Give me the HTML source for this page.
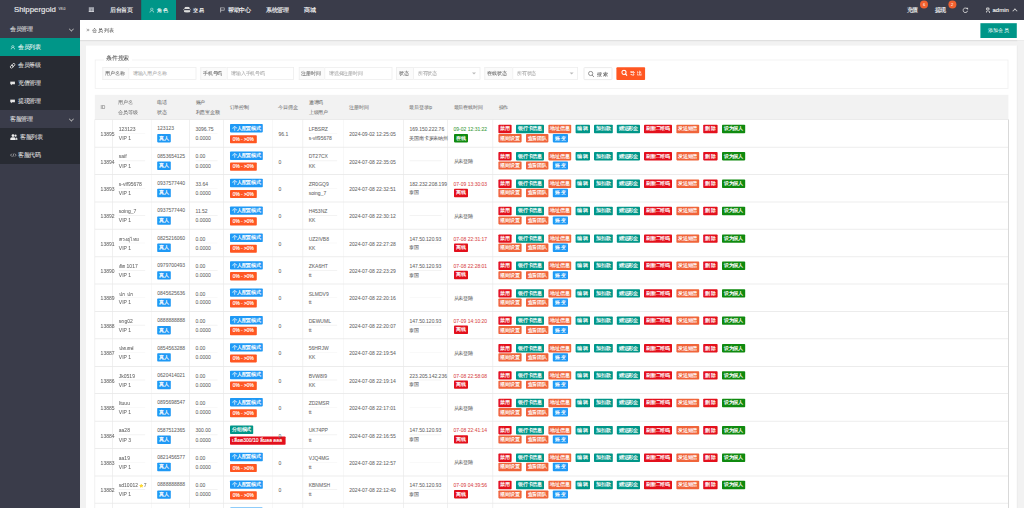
<!DOCTYPE html><html><head><meta charset='utf-8'><style>
*{margin:0;padding:0;box-sizing:border-box}
html,body{width:1024px;height:508px;overflow:hidden;background:#f2f2f2;font-family:'Liberation Sans', sans-serif;}
.ab{position:absolute;white-space:nowrap}
.t{position:absolute;white-space:nowrap;line-height:1;transform:translateY(-50%);-webkit-text-stroke:0.3px currentColor}
.n{-webkit-text-stroke:0.12px currentColor}
.btn{position:absolute;height:20.75px;line-height:20.75px;color:#fff;font-size:12px;text-align:center;border-radius:2px;white-space:nowrap;-webkit-text-stroke:0.375px #fff}
</style></head><body><div id='w' style='position:absolute;left:0;top:0;width:2560px;height:1270px;transform:scale(0.4);transform-origin:0 0;overflow:hidden'><div class='ab' style='left:0;top:0;width:2560px;height:50px;background:#3a3c4a'></div>
<div class='t' style='left:35px;top:22.75px;font-size:19.625px;color:#eaeaea;-webkit-text-stroke:0.375px #eaeaea'>Shippergold</div>
<div class='t' style='left:146.25px;top:21.25px;font-size:8.5px;color:#ccc;-webkit-text-stroke:0.25px #ccc'>V8.0</div>
<div class='ab' style='left:222px;top:17.5px;width:13.25px;height:12.75px;background:#a4a7b0'></div>
<div class='ab' style='left:222px;top:27.5px;width:13.25px;height:2.75px;background:#d8d9de'></div>
<div class='ab' style='left:227.75px;top:21.5px;width:1.5px;height:6px;background:#5a5d68'></div>
<div class='t' style='left:275px;top:25.25px;font-size:13.875px;color:#f4f4f4;-webkit-text-stroke:0.375px #f4f4f4'>后台首页</div>
<div class='ab' style='left:352.5px;top:0;width:87.5px;height:50px;background:#009688'></div>
<svg class='ab' style='left:372.5px;top:18.5px;width:13px;height:13px' viewBox='0 0 10 10'><circle cx='5' cy='3' r='2.3' fill='none' stroke='#cfeee9' stroke-width='1.1'/><path d='M1 10 Q1 5.8 5 5.8 Q9 5.8 9 10' fill='none' stroke='#cfeee9' stroke-width='1.1'/></svg>
<div class='t' style='left:392.5px;top:25.25px;font-size:13.5px;color:#fff;-webkit-text-stroke:0.375px #fff'>角色</div>
<svg class='ab' style='left:457.5px;top:16.25px;width:19.5px;height:16.25px' viewBox='0 0 12 10'><ellipse cx='6' cy='2.3' rx='4' ry='1.8' fill='#ddd'/><ellipse cx='6' cy='5' rx='5.5' ry='2' fill='none' stroke='#ddd' stroke-width='1.2'/><ellipse cx='6' cy='7.6' rx='5' ry='1.8' fill='#ddd'/></svg>
<div class='t' style='left:482.5px;top:25.25px;font-size:13.5px;color:#f4f4f4;-webkit-text-stroke:0.375px #f4f4f4'>交易</div>
<svg class='ab' style='left:549.5px;top:18.25px;width:12.5px;height:13.5px' viewBox='0 0 9 10'><path d='M1 0.5 V10' stroke='#ddd' stroke-width='1.3'/><path d='M1 1 H8 V5.6 H1' fill='none' stroke='#ddd' stroke-width='1.2'/></svg>
<div class='t' style='left:570px;top:25.25px;font-size:13.875px;color:#f4f4f4;-webkit-text-stroke:0.375px #f4f4f4'>帮助中心</div>
<div class='t' style='left:665px;top:25.25px;font-size:13.875px;color:#f4f4f4;-webkit-text-stroke:0.375px #f4f4f4'>系统管理</div>
<div class='t' style='left:760px;top:25.25px;font-size:14px;color:#f4f4f4;-webkit-text-stroke:0.375px #f4f4f4'>商城</div>
<div class='t' style='left:2266.75px;top:25.25px;font-size:14.375px;color:#f4f4f4;-webkit-text-stroke:0.375px #f4f4f4'>充值</div>
<div class='ab' style='left:2300px;top:0.5px;width:20px;height:20px;border-radius:50%;background:#f0612f;color:#fff;font-size:10px;line-height:20px;text-align:center'>6</div>
<div class='t' style='left:2336.5px;top:25.25px;font-size:14.375px;color:#f4f4f4;-webkit-text-stroke:0.375px #f4f4f4'>提现</div>
<div class='ab' style='left:2370.5px;top:0.5px;width:20px;height:20px;border-radius:50%;background:#f0612f;color:#fff;font-size:10px;line-height:20px;text-align:center'>2</div>
<svg class='ab' style='left:2405.5px;top:18px;width:15px;height:15px' viewBox='0 0 10 10'><path d='M8.2 3.2 A3.8 3.8 0 1 0 8.6 6' fill='none' stroke='#e0e0e0' stroke-width='1.6'/><path d='M6.2 1 L9.6 1 L9.6 4.6 Z' fill='#e0e0e0'/></svg>
<div class='ab' style='left:2465px;top:18.75px;width:8.75px;height:7.5px;border-radius:50%;border:2px solid #ddd'></div>
<div class='ab' style='left:2463.75px;top:26.25px;width:11.25px;height:6.25px;border:2px solid #ddd;border-bottom:none;border-radius:5px 5px 0 0'></div>
<div class='t' style='left:2481.25px;top:24.5px;font-size:15px;color:#f4f4f4'>admin</div>
<div class='ab' style='left:2532.5px;top:23.25px;width:8.75px;height:8.75px;border-left:2px solid #ddd;border-top:2px solid #ddd;transform:rotate(45deg)'></div>
<div class='ab' style='left:0;top:50px;width:200px;height:1220px;background:#3a3c4a'></div>
<div class='ab' style='left:0;top:95px;width:200px;height:180px;background:#282b33'></div>
<div class='ab' style='left:0;top:320px;width:200px;height:90px;background:#282b33'></div>
<div class='ab' style='left:0;top:95px;width:200px;height:45px;background:#009688'></div>
<div class='t n' style='left:25px;top:73.75px;font-size:13.75px;color:#e8e8e8'>会员管理</div>
<div class='ab' style='left:173.75px;top:67.5px;width:9px;height:9px;border-right:2px solid #bbb;border-bottom:2px solid #bbb;transform:rotate(45deg)'></div>
<div class='t n' style='left:45px;top:117.5px;font-size:13.75px;color:#fff'>会员列表</div>
<svg class='ab' style='left:25.75px;top:112.5px;width:12.25px;height:11.75px' viewBox='0 0 10 10'><circle cx='5' cy='3' r='2.3' fill='none' stroke='#e0f5f2' stroke-width='1.5'/><path d='M0.8 9.6 Q1.2 5.8 3.6 5.4 M9.2 9.6 Q8.8 5.8 6.4 5.4' fill='none' stroke='#e0f5f2' stroke-width='1.5'/></svg>
<div class='t n' style='left:45px;top:162.5px;font-size:13.75px;color:#e8e8e8'>会员等级</div>
<svg class='ab' style='left:23.5px;top:156.5px;width:15px;height:15px' viewBox='0 0 10 10'><g transform='rotate(-45 5 5)' fill='none' stroke='#e6e6e6' stroke-width='1.5'><rect x='0.3' y='3' width='5.4' height='4' rx='2'/><rect x='4.3' y='3' width='5.4' height='4' rx='2'/></g></svg>
<div class='t n' style='left:45px;top:207.5px;font-size:13.75px;color:#e8e8e8'>充值管理</div>
<svg class='ab' style='left:24.75px;top:203px;width:13px;height:11px' viewBox='0 0 10 8.5'><path d='M0.5 0.5 H9.5 V6 H4 L2 8.3 V6 H0.5 Z' fill='#e6e6e6'/></svg>
<div class='t n' style='left:45px;top:252.5px;font-size:13.75px;color:#e8e8e8'>提现管理</div>
<svg class='ab' style='left:24.75px;top:248px;width:13px;height:11px' viewBox='0 0 10 8.5'><path d='M0.5 0.5 H9.5 V6 H4 L2 8.3 V6 H0.5 Z' fill='#e6e6e6'/></svg>
<div class='t n' style='left:25px;top:298.75px;font-size:13.75px;color:#e8e8e8'>客服管理</div>
<div class='ab' style='left:173.75px;top:292.5px;width:9px;height:9px;border-right:2px solid #bbb;border-bottom:2px solid #bbb;transform:rotate(45deg)'></div>
<svg class='ab' style='left:24.75px;top:334.5px;width:19.5px;height:15px' viewBox='0 0 13 10'><circle cx='5' cy='2.6' r='2.3' fill='#eee'/><path d='M0.5 10 V8 Q0.5 5.6 5 5.6 Q9.5 5.6 9.5 8 V10 Z' fill='#eee'/><circle cx='9.3' cy='2.8' r='1.8' fill='#eee'/><path d='M10 5.8 Q12.6 6 12.6 8 V10 H10.4 Z' fill='#eee'/></svg>
<div class='t n' style='left:50px;top:342.5px;font-size:13.75px;color:#e8e8e8'>客服列表</div>
<svg class='ab' style='left:24.75px;top:383.25px;width:17px;height:9.5px' viewBox='0 0 12 7'><path d='M3.2 0.8 L0.8 3.5 L3.2 6.2 M8.8 0.8 L11.2 3.5 L8.8 6.2 M7 0.5 L5 6.5' fill='none' stroke='#ddd' stroke-width='1.1'/></svg>
<div class='t n' style='left:45px;top:387.5px;font-size:13.75px;color:#e8e8e8'>客服代码</div>
<div class='ab' style='left:200px;top:50px;width:2360px;height:50px;background:#fff'></div>
<div class='ab' style='left:200px;top:99.5px;width:2360px;height:3.5px;background:#e0e0e0'></div>
<svg class='ab' style='left:214.75px;top:71px;width:9.5px;height:8px' viewBox='0 0 8 7'><path d='M1 0.8 L4 3.5 L1 6.2 M4 0.8 L7 3.5 L4 6.2' fill='none' stroke='#888' stroke-width='1.7'/></svg>
<div class='t n' style='left:230.75px;top:75.25px;font-size:13.625px;color:#555'>会员列表</div>
<div class='ab' style='left:2450.75px;top:57.5px;width:90.75px;height:37.5px;background:#009688;color:#fff;font-size:12.5px;line-height:37.5px;text-align:center'>添加会员</div>
<div class='ab' style='left:215px;top:113.75px;width:2327.5px;height:1175px;background:#fff'></div>
<div class='ab' style='left:236.5px;top:149px;width:2284.5px;height:72.5px;border:2.5px solid #f0f0f0'></div>
<div class='ab' style='left:260px;top:137.5px;width:70px;height:17.5px;background:#fff'></div>
<div class='t n' style='left:266px;top:146.25px;font-size:14px;color:#555'>条件搜索</div>
<div class='ab' style='left:256px;top:167.5px;width:64.75px;height:32.5px;background:#fbfbfb;border:2.5px solid #eee;border-right:none'></div>
<div class='t n' style='left:263px;top:183.75px;font-size:11.875px;color:#666'>用户名称</div>
<div class='ab' style='left:320.75px;top:167.5px;width:170px;height:32.5px;background:#fff;border:2.5px solid #eee'></div>
<div class='t n' style='left:332px;top:183.75px;font-size:11.75px;color:#aaa'>请输入用户名称</div>
<div class='ab' style='left:500.5px;top:167.5px;width:66.25px;height:32.5px;background:#fbfbfb;border:2.5px solid #eee;border-right:none'></div>
<div class='t n' style='left:507.5px;top:183.75px;font-size:11.875px;color:#666'>手机号码</div>
<div class='ab' style='left:566.75px;top:167.5px;width:168px;height:32.5px;background:#fff;border:2.5px solid #eee'></div>
<div class='t n' style='left:578px;top:183.75px;font-size:11.75px;color:#aaa'>请输入手机号码</div>
<div class='ab' style='left:746.5px;top:167.5px;width:64.5px;height:32.5px;background:#fbfbfb;border:2.5px solid #eee;border-right:none'></div>
<div class='t n' style='left:753.5px;top:183.75px;font-size:11.875px;color:#666'>注册时间</div>
<div class='ab' style='left:811px;top:167.5px;width:169.5px;height:32.5px;background:#fff;border:2.5px solid #eee'></div>
<div class='t n' style='left:822.25px;top:183.75px;font-size:11.75px;color:#aaa'>请选择注册时间</div>
<div class='ab' style='left:990.25px;top:167.5px;width:43px;height:32.5px;background:#fbfbfb;border:2.5px solid #eee;border-right:none'></div>
<div class='t n' style='left:997.25px;top:183.75px;font-size:11.875px;color:#666'>状态</div>
<div class='ab' style='left:1033.25px;top:167.5px;width:168px;height:32.5px;background:#fff;border:2.5px solid #eee'></div>
<div class='t n' style='left:1044.5px;top:183.75px;font-size:11.75px;color:#aaa'>所有状态</div>
<div class='ab' style='left:1180px;top:181.25px;width:0;height:0;border-left:5px solid transparent;border-right:5px solid transparent;border-top:5px solid #bbb'></div>
<div class='ab' style='left:1211px;top:167.5px;width:70.25px;height:32.5px;background:#fbfbfb;border:2.5px solid #eee;border-right:none'></div>
<div class='t n' style='left:1218px;top:183.75px;font-size:11.875px;color:#666'>在线状态</div>
<div class='ab' style='left:1281.25px;top:167.5px;width:163.75px;height:32.5px;background:#fff;border:2.5px solid #eee'></div>
<div class='t n' style='left:1292.5px;top:183.75px;font-size:11.75px;color:#aaa'>所有状态</div>
<div class='ab' style='left:1423.75px;top:181.25px;width:0;height:0;border-left:5px solid transparent;border-right:5px solid transparent;border-top:5px solid #bbb'></div>
<div class='ab' style='left:1459px;top:167.5px;width:72.25px;height:32.5px;background:#fff;border:2.5px solid #e6e6e6;border-radius:2.5px'></div>
<svg class='ab' style='left:1469.5px;top:176.5px;width:15.5px;height:16.5px' viewBox='0 0 10 10.6'><circle cx='4.3' cy='4.3' r='3.4' fill='none' stroke='#666' stroke-width='1.1'/><path d='M6.8 6.9 L9.4 9.8' stroke='#666' stroke-width='1.3'/></svg>
<div class='t n' style='left:1492px;top:185px;font-size:13px;color:#555;letter-spacing:2.75px'>搜索</div>
<div class='ab' style='left:1541px;top:167.5px;width:71.5px;height:32.5px;background:#FF5722;border-radius:2.5px'></div>
<svg class='ab' style='left:1552.5px;top:173.5px;width:16px;height:16.5px' viewBox='0 0 10 10.3'><circle cx='4.3' cy='4.3' r='3.3' fill='none' stroke='#fff' stroke-width='1.6'/><path d='M6.6 6.8 L9.3 9.6' stroke='#fff' stroke-width='1.8'/></svg>
<div class='t' style='left:1575.75px;top:183.75px;font-size:13px;color:#fff;letter-spacing:2.75px'>导出</div>
<div class='ab' style='left:236.5px;top:236.75px;width:2284.5px;height:62.25px;background:#f2f2f2'></div>
<div class='t n' style='left:251.5px;top:268.75px;font-size:11.5px;color:#777'>ID</div>
<div class='t n' style='left:295.75px;top:256.75px;font-size:11.5px;color:#777'>用户名</div>
<div class='t n' style='left:295.75px;top:280.5px;font-size:11.5px;color:#777'>会员等级</div>
<div class='t n' style='left:393.25px;top:256.75px;font-size:11.5px;color:#777'>电话</div>
<div class='t n' style='left:393.25px;top:280.5px;font-size:11.5px;color:#777'>状态</div>
<div class='t n' style='left:488.75px;top:256.75px;font-size:11.5px;color:#777'>账户</div>
<div class='t n' style='left:488.75px;top:280.5px;font-size:11.5px;color:#777'>利息宝金额</div>
<div class='t n' style='left:573.75px;top:268.75px;font-size:11.5px;color:#777'>订单控制</div>
<div class='t n' style='left:696.25px;top:268.75px;font-size:11.5px;color:#777'>今日佣金</div>
<div class='t n' style='left:771.75px;top:256.75px;font-size:11.5px;color:#777'>邀请码</div>
<div class='t n' style='left:771.75px;top:280.5px;font-size:11.5px;color:#777'>上级用户</div>
<div class='t n' style='left:873.25px;top:268.75px;font-size:11.5px;color:#777'>注册时间</div>
<div class='t n' style='left:1023.5px;top:268.75px;font-size:11.5px;color:#777'>最后登录ip</div>
<div class='t n' style='left:1133.75px;top:268.75px;font-size:11.5px;color:#777'>最后在线时间</div>
<div class='t n' style='left:1246.5px;top:268.75px;font-size:11.5px;color:#777'>操作</div>
<div class='ab' style='left:235.75px;top:299px;width:1.75px;height:971px;background:#ededed'></div>
<div class='ab' style='left:280px;top:299px;width:1.75px;height:971px;background:#ededed'></div>
<div class='ab' style='left:377.5px;top:299px;width:1.75px;height:971px;background:#ededed'></div>
<div class='ab' style='left:473px;top:299px;width:1.75px;height:971px;background:#ededed'></div>
<div class='ab' style='left:558px;top:299px;width:1.75px;height:971px;background:#ededed'></div>
<div class='ab' style='left:680.5px;top:299px;width:1.75px;height:971px;background:#ededed'></div>
<div class='ab' style='left:756px;top:299px;width:1.75px;height:971px;background:#ededed'></div>
<div class='ab' style='left:857.5px;top:299px;width:1.75px;height:971px;background:#ededed'></div>
<div class='ab' style='left:1007.75px;top:299px;width:1.75px;height:971px;background:#ededed'></div>
<div class='ab' style='left:1118px;top:299px;width:1.75px;height:971px;background:#ededed'></div>
<div class='ab' style='left:1230.75px;top:299px;width:1.75px;height:971px;background:#ededed'></div>
<div class='ab' style='left:2519.75px;top:299px;width:1.75px;height:971px;background:#ededed'></div>
<div class='ab' style='left:236.5px;top:298px;width:2284.5px;height:2px;background:#e8e8e8'></div>
<div class='ab' style='left:236.5px;top:366.5px;width:2284.5px;height:2px;background:#e8e8e8'></div>
<div class='ab' style='left:236.5px;top:435px;width:2284.5px;height:2px;background:#e8e8e8'></div>
<div class='ab' style='left:236.5px;top:503.5px;width:2284.5px;height:2px;background:#e8e8e8'></div>
<div class='ab' style='left:236.5px;top:572px;width:2284.5px;height:2px;background:#e8e8e8'></div>
<div class='ab' style='left:236.5px;top:640.5px;width:2284.5px;height:2px;background:#e8e8e8'></div>
<div class='ab' style='left:236.5px;top:709px;width:2284.5px;height:2px;background:#e8e8e8'></div>
<div class='ab' style='left:236.5px;top:777.5px;width:2284.5px;height:2px;background:#e8e8e8'></div>
<div class='ab' style='left:236.5px;top:846px;width:2284.5px;height:2px;background:#e8e8e8'></div>
<div class='ab' style='left:236.5px;top:914.5px;width:2284.5px;height:2px;background:#e8e8e8'></div>
<div class='ab' style='left:236.5px;top:983px;width:2284.5px;height:2px;background:#e8e8e8'></div>
<div class='ab' style='left:236.5px;top:1051.5px;width:2284.5px;height:2px;background:#e8e8e8'></div>
<div class='ab' style='left:236.5px;top:1120px;width:2284.5px;height:2px;background:#e8e8e8'></div>
<div class='ab' style='left:236.5px;top:1188.5px;width:2284.5px;height:2px;background:#e8e8e8'></div>
<div class='ab' style='left:236.5px;top:1257px;width:2284.5px;height:2px;background:#e8e8e8'></div>
<div class='ab' style='left:236.5px;top:1325.5px;width:2284.5px;height:2px;background:#e8e8e8'></div>
<div class='t n' style='left:251.5px;top:336.125px;font-size:12.5px;color:#666'>13895</div>
<div class='t n' style='left:297px;top:323.5px;font-size:12.5px;color:#666'>123123</div>
<div class='ab' style='left:297px;top:332.5px;width:66.25px;height:1.5px;background:#f0f0f0'></div>
<div class='t n' style='left:297px;top:346px;font-size:12.5px;color:#666'>VIP 1</div>
<div class='t n' style='left:393.25px;top:321.5px;font-size:12.5px;color:#666'>123123</div>
<div class='btn' style='left:392.5px;top:335.25px;width:34.5px;height:20.75px;line-height:20.75px;background:#1f99f5'>真人</div>
<div class='t n' style='left:488.75px;top:323.5px;font-size:12.5px;color:#666'>3096.75</div>
<div class='ab' style='left:488.75px;top:332.5px;width:55px;height:1.5px;background:#f0f0f0'></div>
<div class='t n' style='left:488.75px;top:346px;font-size:12.5px;color:#666'>0.0000</div>
<div class='btn' style='left:575px;top:310.25px;width:82px;height:20.75px;line-height:20.75px;background:#1f99f5'>个人配置模式</div>
<div class='btn' style='left:575px;top:337.5px;width:66.5px;height:20.75px;line-height:20.75px;background:#FF5722'>0% - &gt;0%</div>
<div class='t n' style='left:696.25px;top:336.125px;font-size:12.5px;color:#666'>96.1</div>
<div class='t n' style='left:771.75px;top:323.5px;font-size:12.5px;color:#666'>LFBSRZ</div>
<div class='ab' style='left:771.75px;top:332.5px;width:71.5px;height:1.5px;background:#f0f0f0'></div>
<div class='t n' style='left:771.75px;top:346px;font-size:12.5px;color:#666'>s-vlf95678</div>
<div class='t n' style='left:873.25px;top:336.125px;font-size:12.5px;color:#666'>2024-09-02 12:25:05</div>
<div class='ab' style='left:1023.5px;top:332.5px;width:80.25px;height:1.5px;background:#f0f0f0'></div>
<div class='t n' style='left:1023.5px;top:323.5px;font-size:12.5px;color:#666'>169.150.222.76</div>
<div class='t n' style='left:1023.5px;top:346px;font-size:11.875px;color:#666'>美国南卡罗来纳州</div>
<div class='t n' style='left:1133.75px;top:323.5px;font-size:12.5px;color:#3a9a3a'>09-02 12:31:22</div>
<div class='btn' style='left:1135px;top:334.75px;width:35px;height:20.75px;line-height:20.75px;background:#0f8a0f'>在线</div>
<div class='btn' style='left:1246px;top:311.75px;width:33.25px;height:20.75px;line-height:20.75px;background:#e3101c'>禁用</div>
<div class='btn' style='left:1290.25px;top:311.75px;width:69.25px;height:20.75px;line-height:20.75px;background:#009688'>银行卡信息</div>
<div class='btn' style='left:1370.5px;top:311.75px;width:57.5px;height:20.75px;line-height:20.75px;background:#f0643a'>地址信息</div>
<div class='btn' style='left:1438.5px;top:311.75px;width:36.25px;height:20.75px;line-height:20.75px;background:#009688'>编 辑</div>
<div class='btn' style='left:1485.25px;top:311.75px;width:46.25px;height:20.75px;line-height:20.75px;background:#009688'>加扣款</div>
<div class='btn' style='left:1542.25px;top:311.75px;width:57.5px;height:20.75px;line-height:20.75px;background:#009688'>赠送彩金</div>
<div class='btn' style='left:1610.25px;top:311.75px;width:69.5px;height:20.75px;line-height:20.75px;background:#e3101c'>刷新二维码</div>
<div class='btn' style='left:1690.5px;top:311.75px;width:57px;height:20.75px;line-height:20.75px;background:#f0643a'>发送短信</div>
<div class='btn' style='left:1758px;top:311.75px;width:36.25px;height:20.75px;line-height:20.75px;background:#e3101c'>删 除</div>
<div class='btn' style='left:1804.75px;top:311.75px;width:57.75px;height:20.75px;line-height:20.75px;background:#0f8a0f'>设为假人</div>
<div class='btn' style='left:1246px;top:335px;width:57.5px;height:20.75px;line-height:20.75px;background:#f0643a'>规则设置</div>
<div class='btn' style='left:1314.5px;top:335px;width:56.75px;height:20.75px;line-height:20.75px;background:#f0643a'>查看团队</div>
<div class='btn' style='left:1382.25px;top:335px;width:37.75px;height:20.75px;line-height:20.75px;background:#1f99f5'>账 变</div>
<div class='t n' style='left:251.5px;top:404.625px;font-size:12.5px;color:#666'>13894</div>
<div class='t n' style='left:297px;top:392px;font-size:12.5px;color:#666'>saif</div>
<div class='ab' style='left:297px;top:401px;width:66.25px;height:1.5px;background:#f0f0f0'></div>
<div class='t n' style='left:297px;top:414.5px;font-size:12.5px;color:#666'>VIP 1</div>
<div class='t n' style='left:393.25px;top:390px;font-size:12.5px;color:#666'>0853654125</div>
<div class='btn' style='left:392.5px;top:403.75px;width:34.5px;height:20.75px;line-height:20.75px;background:#1f99f5'>真人</div>
<div class='t n' style='left:488.75px;top:392px;font-size:12.5px;color:#666'>0.00</div>
<div class='ab' style='left:488.75px;top:401px;width:55px;height:1.5px;background:#f0f0f0'></div>
<div class='t n' style='left:488.75px;top:414.5px;font-size:12.5px;color:#666'>0.0000</div>
<div class='btn' style='left:575px;top:378.75px;width:82px;height:20.75px;line-height:20.75px;background:#1f99f5'>个人配置模式</div>
<div class='btn' style='left:575px;top:406px;width:66.5px;height:20.75px;line-height:20.75px;background:#FF5722'>0% - &gt;0%</div>
<div class='t n' style='left:696.25px;top:404.625px;font-size:12.5px;color:#666'>0</div>
<div class='t n' style='left:771.75px;top:392px;font-size:12.5px;color:#666'>DT27CX</div>
<div class='ab' style='left:771.75px;top:401px;width:71.5px;height:1.5px;background:#f0f0f0'></div>
<div class='t n' style='left:771.75px;top:414.5px;font-size:12.5px;color:#666'>KK</div>
<div class='t n' style='left:873.25px;top:404.625px;font-size:12.5px;color:#666'>2024-07-08 22:35:05</div>
<div class='ab' style='left:1023.5px;top:401px;width:80.25px;height:1.5px;background:#f0f0f0'></div>
<div class='t n' style='left:1133.75px;top:404.625px;font-size:11.875px;color:#666'>从未登陆</div>
<div class='btn' style='left:1246px;top:380.25px;width:33.25px;height:20.75px;line-height:20.75px;background:#e3101c'>禁用</div>
<div class='btn' style='left:1290.25px;top:380.25px;width:69.25px;height:20.75px;line-height:20.75px;background:#009688'>银行卡信息</div>
<div class='btn' style='left:1370.5px;top:380.25px;width:57.5px;height:20.75px;line-height:20.75px;background:#f0643a'>地址信息</div>
<div class='btn' style='left:1438.5px;top:380.25px;width:36.25px;height:20.75px;line-height:20.75px;background:#009688'>编 辑</div>
<div class='btn' style='left:1485.25px;top:380.25px;width:46.25px;height:20.75px;line-height:20.75px;background:#009688'>加扣款</div>
<div class='btn' style='left:1542.25px;top:380.25px;width:57.5px;height:20.75px;line-height:20.75px;background:#009688'>赠送彩金</div>
<div class='btn' style='left:1610.25px;top:380.25px;width:69.5px;height:20.75px;line-height:20.75px;background:#e3101c'>刷新二维码</div>
<div class='btn' style='left:1690.5px;top:380.25px;width:57px;height:20.75px;line-height:20.75px;background:#f0643a'>发送短信</div>
<div class='btn' style='left:1758px;top:380.25px;width:36.25px;height:20.75px;line-height:20.75px;background:#e3101c'>删 除</div>
<div class='btn' style='left:1804.75px;top:380.25px;width:57.75px;height:20.75px;line-height:20.75px;background:#0f8a0f'>设为假人</div>
<div class='btn' style='left:1246px;top:403.5px;width:57.5px;height:20.75px;line-height:20.75px;background:#f0643a'>规则设置</div>
<div class='btn' style='left:1314.5px;top:403.5px;width:56.75px;height:20.75px;line-height:20.75px;background:#f0643a'>查看团队</div>
<div class='btn' style='left:1382.25px;top:403.5px;width:37.75px;height:20.75px;line-height:20.75px;background:#1f99f5'>账 变</div>
<div class='t n' style='left:251.5px;top:473.125px;font-size:12.5px;color:#666'>13893</div>
<div class='t n' style='left:297px;top:460.5px;font-size:12.5px;color:#666'>s-vlf95678</div>
<div class='ab' style='left:297px;top:469.5px;width:66.25px;height:1.5px;background:#f0f0f0'></div>
<div class='t n' style='left:297px;top:483px;font-size:12.5px;color:#666'>VIP 1</div>
<div class='t n' style='left:393.25px;top:458.5px;font-size:12.5px;color:#666'>0937577440</div>
<div class='btn' style='left:392.5px;top:472.25px;width:34.5px;height:20.75px;line-height:20.75px;background:#1f99f5'>真人</div>
<div class='t n' style='left:488.75px;top:460.5px;font-size:12.5px;color:#666'>33.64</div>
<div class='ab' style='left:488.75px;top:469.5px;width:55px;height:1.5px;background:#f0f0f0'></div>
<div class='t n' style='left:488.75px;top:483px;font-size:12.5px;color:#666'>0.0000</div>
<div class='btn' style='left:575px;top:447.25px;width:82px;height:20.75px;line-height:20.75px;background:#1f99f5'>个人配置模式</div>
<div class='btn' style='left:575px;top:474.5px;width:66.5px;height:20.75px;line-height:20.75px;background:#FF5722'>0% - &gt;0%</div>
<div class='t n' style='left:696.25px;top:473.125px;font-size:12.5px;color:#666'>0</div>
<div class='t n' style='left:771.75px;top:460.5px;font-size:12.5px;color:#666'>ZR0GQ9</div>
<div class='ab' style='left:771.75px;top:469.5px;width:71.5px;height:1.5px;background:#f0f0f0'></div>
<div class='t n' style='left:771.75px;top:483px;font-size:12.5px;color:#666'>soing_7</div>
<div class='t n' style='left:873.25px;top:473.125px;font-size:12.5px;color:#666'>2024-07-08 22:32:51</div>
<div class='ab' style='left:1023.5px;top:469.5px;width:80.25px;height:1.5px;background:#f0f0f0'></div>
<div class='t n' style='left:1023.5px;top:460.5px;font-size:12.5px;color:#666'>182.232.208.199</div>
<div class='t n' style='left:1023.5px;top:483px;font-size:11.875px;color:#666'>泰国</div>
<div class='t n' style='left:1133.75px;top:460.5px;font-size:12.5px;color:#d94a4a'>07-09 13:30:03</div>
<div class='btn' style='left:1135px;top:471.75px;width:35px;height:20.75px;line-height:20.75px;background:#e3101c'>离线</div>
<div class='btn' style='left:1246px;top:448.75px;width:33.25px;height:20.75px;line-height:20.75px;background:#e3101c'>禁用</div>
<div class='btn' style='left:1290.25px;top:448.75px;width:69.25px;height:20.75px;line-height:20.75px;background:#009688'>银行卡信息</div>
<div class='btn' style='left:1370.5px;top:448.75px;width:57.5px;height:20.75px;line-height:20.75px;background:#f0643a'>地址信息</div>
<div class='btn' style='left:1438.5px;top:448.75px;width:36.25px;height:20.75px;line-height:20.75px;background:#009688'>编 辑</div>
<div class='btn' style='left:1485.25px;top:448.75px;width:46.25px;height:20.75px;line-height:20.75px;background:#009688'>加扣款</div>
<div class='btn' style='left:1542.25px;top:448.75px;width:57.5px;height:20.75px;line-height:20.75px;background:#009688'>赠送彩金</div>
<div class='btn' style='left:1610.25px;top:448.75px;width:69.5px;height:20.75px;line-height:20.75px;background:#e3101c'>刷新二维码</div>
<div class='btn' style='left:1690.5px;top:448.75px;width:57px;height:20.75px;line-height:20.75px;background:#f0643a'>发送短信</div>
<div class='btn' style='left:1758px;top:448.75px;width:36.25px;height:20.75px;line-height:20.75px;background:#e3101c'>删 除</div>
<div class='btn' style='left:1804.75px;top:448.75px;width:57.75px;height:20.75px;line-height:20.75px;background:#0f8a0f'>设为假人</div>
<div class='btn' style='left:1246px;top:472px;width:57.5px;height:20.75px;line-height:20.75px;background:#f0643a'>规则设置</div>
<div class='btn' style='left:1314.5px;top:472px;width:56.75px;height:20.75px;line-height:20.75px;background:#f0643a'>查看团队</div>
<div class='btn' style='left:1382.25px;top:472px;width:37.75px;height:20.75px;line-height:20.75px;background:#1f99f5'>账 变</div>
<div class='t n' style='left:251.5px;top:541.625px;font-size:12.5px;color:#666'>13892</div>
<div class='t n' style='left:297px;top:529px;font-size:12.5px;color:#666'>soing_7</div>
<div class='ab' style='left:297px;top:538px;width:66.25px;height:1.5px;background:#f0f0f0'></div>
<div class='t n' style='left:297px;top:551.5px;font-size:12.5px;color:#666'>VIP 1</div>
<div class='t n' style='left:393.25px;top:527px;font-size:12.5px;color:#666'>0937577440</div>
<div class='btn' style='left:392.5px;top:540.75px;width:34.5px;height:20.75px;line-height:20.75px;background:#1f99f5'>真人</div>
<div class='t n' style='left:488.75px;top:529px;font-size:12.5px;color:#666'>11.52</div>
<div class='ab' style='left:488.75px;top:538px;width:55px;height:1.5px;background:#f0f0f0'></div>
<div class='t n' style='left:488.75px;top:551.5px;font-size:12.5px;color:#666'>0.0000</div>
<div class='btn' style='left:575px;top:515.75px;width:82px;height:20.75px;line-height:20.75px;background:#1f99f5'>个人配置模式</div>
<div class='btn' style='left:575px;top:543px;width:66.5px;height:20.75px;line-height:20.75px;background:#FF5722'>0% - &gt;0%</div>
<div class='t n' style='left:696.25px;top:541.625px;font-size:12.5px;color:#666'>0</div>
<div class='t n' style='left:771.75px;top:529px;font-size:12.5px;color:#666'>H453NZ</div>
<div class='ab' style='left:771.75px;top:538px;width:71.5px;height:1.5px;background:#f0f0f0'></div>
<div class='t n' style='left:771.75px;top:551.5px;font-size:12.5px;color:#666'>KK</div>
<div class='t n' style='left:873.25px;top:541.625px;font-size:12.5px;color:#666'>2024-07-08 22:30:12</div>
<div class='ab' style='left:1023.5px;top:538px;width:80.25px;height:1.5px;background:#f0f0f0'></div>
<div class='t n' style='left:1133.75px;top:541.625px;font-size:11.875px;color:#666'>从未登陆</div>
<div class='btn' style='left:1246px;top:517.25px;width:33.25px;height:20.75px;line-height:20.75px;background:#e3101c'>禁用</div>
<div class='btn' style='left:1290.25px;top:517.25px;width:69.25px;height:20.75px;line-height:20.75px;background:#009688'>银行卡信息</div>
<div class='btn' style='left:1370.5px;top:517.25px;width:57.5px;height:20.75px;line-height:20.75px;background:#f0643a'>地址信息</div>
<div class='btn' style='left:1438.5px;top:517.25px;width:36.25px;height:20.75px;line-height:20.75px;background:#009688'>编 辑</div>
<div class='btn' style='left:1485.25px;top:517.25px;width:46.25px;height:20.75px;line-height:20.75px;background:#009688'>加扣款</div>
<div class='btn' style='left:1542.25px;top:517.25px;width:57.5px;height:20.75px;line-height:20.75px;background:#009688'>赠送彩金</div>
<div class='btn' style='left:1610.25px;top:517.25px;width:69.5px;height:20.75px;line-height:20.75px;background:#e3101c'>刷新二维码</div>
<div class='btn' style='left:1690.5px;top:517.25px;width:57px;height:20.75px;line-height:20.75px;background:#f0643a'>发送短信</div>
<div class='btn' style='left:1758px;top:517.25px;width:36.25px;height:20.75px;line-height:20.75px;background:#e3101c'>删 除</div>
<div class='btn' style='left:1804.75px;top:517.25px;width:57.75px;height:20.75px;line-height:20.75px;background:#0f8a0f'>设为假人</div>
<div class='btn' style='left:1246px;top:540.5px;width:57.5px;height:20.75px;line-height:20.75px;background:#f0643a'>规则设置</div>
<div class='btn' style='left:1314.5px;top:540.5px;width:56.75px;height:20.75px;line-height:20.75px;background:#f0643a'>查看团队</div>
<div class='btn' style='left:1382.25px;top:540.5px;width:37.75px;height:20.75px;line-height:20.75px;background:#1f99f5'>账 变</div>
<div class='t n' style='left:251.5px;top:610.125px;font-size:12.5px;color:#666'>13891</div>
<div class='t n' style='left:297px;top:597.5px;font-size:12.5px;color:#666'>ควงอุไทย</div>
<div class='ab' style='left:297px;top:606.5px;width:66.25px;height:1.5px;background:#f0f0f0'></div>
<div class='t n' style='left:297px;top:620px;font-size:12.5px;color:#666'>VIP 1</div>
<div class='t n' style='left:393.25px;top:595.5px;font-size:12.5px;color:#666'>0825216060</div>
<div class='btn' style='left:392.5px;top:609.25px;width:34.5px;height:20.75px;line-height:20.75px;background:#1f99f5'>真人</div>
<div class='t n' style='left:488.75px;top:597.5px;font-size:12.5px;color:#666'>0.00</div>
<div class='ab' style='left:488.75px;top:606.5px;width:55px;height:1.5px;background:#f0f0f0'></div>
<div class='t n' style='left:488.75px;top:620px;font-size:12.5px;color:#666'>0.0000</div>
<div class='btn' style='left:575px;top:584.25px;width:82px;height:20.75px;line-height:20.75px;background:#1f99f5'>个人配置模式</div>
<div class='btn' style='left:575px;top:611.5px;width:66.5px;height:20.75px;line-height:20.75px;background:#FF5722'>0% - &gt;0%</div>
<div class='t n' style='left:696.25px;top:610.125px;font-size:12.5px;color:#666'>0</div>
<div class='t n' style='left:771.75px;top:597.5px;font-size:12.5px;color:#666'>UZ2IVB8</div>
<div class='ab' style='left:771.75px;top:606.5px;width:71.5px;height:1.5px;background:#f0f0f0'></div>
<div class='t n' style='left:771.75px;top:620px;font-size:12.5px;color:#666'>KK</div>
<div class='t n' style='left:873.25px;top:610.125px;font-size:12.5px;color:#666'>2024-07-08 22:27:28</div>
<div class='ab' style='left:1023.5px;top:606.5px;width:80.25px;height:1.5px;background:#f0f0f0'></div>
<div class='t n' style='left:1023.5px;top:597.5px;font-size:12.5px;color:#666'>147.50.120.93</div>
<div class='t n' style='left:1023.5px;top:620px;font-size:11.875px;color:#666'>泰国</div>
<div class='t n' style='left:1133.75px;top:597.5px;font-size:12.5px;color:#d94a4a'>07-08 22:31:17</div>
<div class='btn' style='left:1135px;top:608.75px;width:35px;height:20.75px;line-height:20.75px;background:#e3101c'>离线</div>
<div class='btn' style='left:1246px;top:585.75px;width:33.25px;height:20.75px;line-height:20.75px;background:#e3101c'>禁用</div>
<div class='btn' style='left:1290.25px;top:585.75px;width:69.25px;height:20.75px;line-height:20.75px;background:#009688'>银行卡信息</div>
<div class='btn' style='left:1370.5px;top:585.75px;width:57.5px;height:20.75px;line-height:20.75px;background:#f0643a'>地址信息</div>
<div class='btn' style='left:1438.5px;top:585.75px;width:36.25px;height:20.75px;line-height:20.75px;background:#009688'>编 辑</div>
<div class='btn' style='left:1485.25px;top:585.75px;width:46.25px;height:20.75px;line-height:20.75px;background:#009688'>加扣款</div>
<div class='btn' style='left:1542.25px;top:585.75px;width:57.5px;height:20.75px;line-height:20.75px;background:#009688'>赠送彩金</div>
<div class='btn' style='left:1610.25px;top:585.75px;width:69.5px;height:20.75px;line-height:20.75px;background:#e3101c'>刷新二维码</div>
<div class='btn' style='left:1690.5px;top:585.75px;width:57px;height:20.75px;line-height:20.75px;background:#f0643a'>发送短信</div>
<div class='btn' style='left:1758px;top:585.75px;width:36.25px;height:20.75px;line-height:20.75px;background:#e3101c'>删 除</div>
<div class='btn' style='left:1804.75px;top:585.75px;width:57.75px;height:20.75px;line-height:20.75px;background:#0f8a0f'>设为假人</div>
<div class='btn' style='left:1246px;top:609px;width:57.5px;height:20.75px;line-height:20.75px;background:#f0643a'>规则设置</div>
<div class='btn' style='left:1314.5px;top:609px;width:56.75px;height:20.75px;line-height:20.75px;background:#f0643a'>查看团队</div>
<div class='btn' style='left:1382.25px;top:609px;width:37.75px;height:20.75px;line-height:20.75px;background:#1f99f5'>账 变</div>
<div class='t n' style='left:251.5px;top:678.625px;font-size:12.5px;color:#666'>13890</div>
<div class='t n' style='left:297px;top:666px;font-size:12.5px;color:#666'>ตัด 1017</div>
<div class='ab' style='left:297px;top:675px;width:66.25px;height:1.5px;background:#f0f0f0'></div>
<div class='t n' style='left:297px;top:688.5px;font-size:12.5px;color:#666'>VIP 1</div>
<div class='t n' style='left:393.25px;top:664px;font-size:12.5px;color:#666'>0979700493</div>
<div class='btn' style='left:392.5px;top:677.75px;width:34.5px;height:20.75px;line-height:20.75px;background:#1f99f5'>真人</div>
<div class='t n' style='left:488.75px;top:666px;font-size:12.5px;color:#666'>0.00</div>
<div class='ab' style='left:488.75px;top:675px;width:55px;height:1.5px;background:#f0f0f0'></div>
<div class='t n' style='left:488.75px;top:688.5px;font-size:12.5px;color:#666'>0.0000</div>
<div class='btn' style='left:575px;top:652.75px;width:82px;height:20.75px;line-height:20.75px;background:#1f99f5'>个人配置模式</div>
<div class='btn' style='left:575px;top:680px;width:66.5px;height:20.75px;line-height:20.75px;background:#FF5722'>0% - &gt;0%</div>
<div class='t n' style='left:696.25px;top:678.625px;font-size:12.5px;color:#666'>0</div>
<div class='t n' style='left:771.75px;top:666px;font-size:12.5px;color:#666'>ZKA6HT</div>
<div class='ab' style='left:771.75px;top:675px;width:71.5px;height:1.5px;background:#f0f0f0'></div>
<div class='t n' style='left:771.75px;top:688.5px;font-size:12.5px;color:#666'>tt</div>
<div class='t n' style='left:873.25px;top:678.625px;font-size:12.5px;color:#666'>2024-07-08 22:23:29</div>
<div class='ab' style='left:1023.5px;top:675px;width:80.25px;height:1.5px;background:#f0f0f0'></div>
<div class='t n' style='left:1023.5px;top:666px;font-size:12.5px;color:#666'>147.50.120.93</div>
<div class='t n' style='left:1023.5px;top:688.5px;font-size:11.875px;color:#666'>泰国</div>
<div class='t n' style='left:1133.75px;top:666px;font-size:12.5px;color:#d94a4a'>07-08 22:28:01</div>
<div class='btn' style='left:1135px;top:677.25px;width:35px;height:20.75px;line-height:20.75px;background:#e3101c'>离线</div>
<div class='btn' style='left:1246px;top:654.25px;width:33.25px;height:20.75px;line-height:20.75px;background:#e3101c'>禁用</div>
<div class='btn' style='left:1290.25px;top:654.25px;width:69.25px;height:20.75px;line-height:20.75px;background:#009688'>银行卡信息</div>
<div class='btn' style='left:1370.5px;top:654.25px;width:57.5px;height:20.75px;line-height:20.75px;background:#f0643a'>地址信息</div>
<div class='btn' style='left:1438.5px;top:654.25px;width:36.25px;height:20.75px;line-height:20.75px;background:#009688'>编 辑</div>
<div class='btn' style='left:1485.25px;top:654.25px;width:46.25px;height:20.75px;line-height:20.75px;background:#009688'>加扣款</div>
<div class='btn' style='left:1542.25px;top:654.25px;width:57.5px;height:20.75px;line-height:20.75px;background:#009688'>赠送彩金</div>
<div class='btn' style='left:1610.25px;top:654.25px;width:69.5px;height:20.75px;line-height:20.75px;background:#e3101c'>刷新二维码</div>
<div class='btn' style='left:1690.5px;top:654.25px;width:57px;height:20.75px;line-height:20.75px;background:#f0643a'>发送短信</div>
<div class='btn' style='left:1758px;top:654.25px;width:36.25px;height:20.75px;line-height:20.75px;background:#e3101c'>删 除</div>
<div class='btn' style='left:1804.75px;top:654.25px;width:57.75px;height:20.75px;line-height:20.75px;background:#0f8a0f'>设为假人</div>
<div class='btn' style='left:1246px;top:677.5px;width:57.5px;height:20.75px;line-height:20.75px;background:#f0643a'>规则设置</div>
<div class='btn' style='left:1314.5px;top:677.5px;width:56.75px;height:20.75px;line-height:20.75px;background:#f0643a'>查看团队</div>
<div class='btn' style='left:1382.25px;top:677.5px;width:37.75px;height:20.75px;line-height:20.75px;background:#1f99f5'>账 变</div>
<div class='t n' style='left:251.5px;top:747.125px;font-size:12.5px;color:#666'>13889</div>
<div class='t n' style='left:297px;top:734.5px;font-size:12.5px;color:#666'>ปก ปก</div>
<div class='ab' style='left:297px;top:743.5px;width:66.25px;height:1.5px;background:#f0f0f0'></div>
<div class='t n' style='left:297px;top:757px;font-size:12.5px;color:#666'>VIP 1</div>
<div class='t n' style='left:393.25px;top:732.5px;font-size:12.5px;color:#666'>0845625636</div>
<div class='btn' style='left:392.5px;top:746.25px;width:34.5px;height:20.75px;line-height:20.75px;background:#1f99f5'>真人</div>
<div class='t n' style='left:488.75px;top:734.5px;font-size:12.5px;color:#666'>0.00</div>
<div class='ab' style='left:488.75px;top:743.5px;width:55px;height:1.5px;background:#f0f0f0'></div>
<div class='t n' style='left:488.75px;top:757px;font-size:12.5px;color:#666'>0.0000</div>
<div class='btn' style='left:575px;top:721.25px;width:82px;height:20.75px;line-height:20.75px;background:#1f99f5'>个人配置模式</div>
<div class='btn' style='left:575px;top:748.5px;width:66.5px;height:20.75px;line-height:20.75px;background:#FF5722'>0% - &gt;0%</div>
<div class='t n' style='left:696.25px;top:747.125px;font-size:12.5px;color:#666'>0</div>
<div class='t n' style='left:771.75px;top:734.5px;font-size:12.5px;color:#666'>SLMDV9</div>
<div class='ab' style='left:771.75px;top:743.5px;width:71.5px;height:1.5px;background:#f0f0f0'></div>
<div class='t n' style='left:771.75px;top:757px;font-size:12.5px;color:#666'>tt</div>
<div class='t n' style='left:873.25px;top:747.125px;font-size:12.5px;color:#666'>2024-07-08 22:20:16</div>
<div class='ab' style='left:1023.5px;top:743.5px;width:80.25px;height:1.5px;background:#f0f0f0'></div>
<div class='t n' style='left:1133.75px;top:747.125px;font-size:11.875px;color:#666'>从未登陆</div>
<div class='btn' style='left:1246px;top:722.75px;width:33.25px;height:20.75px;line-height:20.75px;background:#e3101c'>禁用</div>
<div class='btn' style='left:1290.25px;top:722.75px;width:69.25px;height:20.75px;line-height:20.75px;background:#009688'>银行卡信息</div>
<div class='btn' style='left:1370.5px;top:722.75px;width:57.5px;height:20.75px;line-height:20.75px;background:#f0643a'>地址信息</div>
<div class='btn' style='left:1438.5px;top:722.75px;width:36.25px;height:20.75px;line-height:20.75px;background:#009688'>编 辑</div>
<div class='btn' style='left:1485.25px;top:722.75px;width:46.25px;height:20.75px;line-height:20.75px;background:#009688'>加扣款</div>
<div class='btn' style='left:1542.25px;top:722.75px;width:57.5px;height:20.75px;line-height:20.75px;background:#009688'>赠送彩金</div>
<div class='btn' style='left:1610.25px;top:722.75px;width:69.5px;height:20.75px;line-height:20.75px;background:#e3101c'>刷新二维码</div>
<div class='btn' style='left:1690.5px;top:722.75px;width:57px;height:20.75px;line-height:20.75px;background:#f0643a'>发送短信</div>
<div class='btn' style='left:1758px;top:722.75px;width:36.25px;height:20.75px;line-height:20.75px;background:#e3101c'>删 除</div>
<div class='btn' style='left:1804.75px;top:722.75px;width:57.75px;height:20.75px;line-height:20.75px;background:#0f8a0f'>设为假人</div>
<div class='btn' style='left:1246px;top:746px;width:57.5px;height:20.75px;line-height:20.75px;background:#f0643a'>规则设置</div>
<div class='btn' style='left:1314.5px;top:746px;width:56.75px;height:20.75px;line-height:20.75px;background:#f0643a'>查看团队</div>
<div class='btn' style='left:1382.25px;top:746px;width:37.75px;height:20.75px;line-height:20.75px;background:#1f99f5'>账 变</div>
<div class='t n' style='left:251.5px;top:815.625px;font-size:12.5px;color:#666'>13888</div>
<div class='t n' style='left:297px;top:803px;font-size:12.5px;color:#666'>sถg02</div>
<div class='ab' style='left:297px;top:812px;width:66.25px;height:1.5px;background:#f0f0f0'></div>
<div class='t n' style='left:297px;top:825.5px;font-size:12.5px;color:#666'>VIP 1</div>
<div class='t n' style='left:393.25px;top:801px;font-size:12.5px;color:#666'>0888888888</div>
<div class='btn' style='left:392.5px;top:814.75px;width:34.5px;height:20.75px;line-height:20.75px;background:#1f99f5'>真人</div>
<div class='t n' style='left:488.75px;top:803px;font-size:12.5px;color:#666'>0.00</div>
<div class='ab' style='left:488.75px;top:812px;width:55px;height:1.5px;background:#f0f0f0'></div>
<div class='t n' style='left:488.75px;top:825.5px;font-size:12.5px;color:#666'>0.0000</div>
<div class='btn' style='left:575px;top:789.75px;width:82px;height:20.75px;line-height:20.75px;background:#1f99f5'>个人配置模式</div>
<div class='btn' style='left:575px;top:817px;width:66.5px;height:20.75px;line-height:20.75px;background:#FF5722'>0% - &gt;0%</div>
<div class='t n' style='left:696.25px;top:815.625px;font-size:12.5px;color:#666'>0</div>
<div class='t n' style='left:771.75px;top:803px;font-size:12.5px;color:#666'>DEWUML</div>
<div class='ab' style='left:771.75px;top:812px;width:71.5px;height:1.5px;background:#f0f0f0'></div>
<div class='t n' style='left:771.75px;top:825.5px;font-size:12.5px;color:#666'>tt</div>
<div class='t n' style='left:873.25px;top:815.625px;font-size:12.5px;color:#666'>2024-07-08 22:20:07</div>
<div class='ab' style='left:1023.5px;top:812px;width:80.25px;height:1.5px;background:#f0f0f0'></div>
<div class='t n' style='left:1023.5px;top:803px;font-size:12.5px;color:#666'>147.50.120.93</div>
<div class='t n' style='left:1023.5px;top:825.5px;font-size:11.875px;color:#666'>泰国</div>
<div class='t n' style='left:1133.75px;top:803px;font-size:12.5px;color:#d94a4a'>07-09 14:10:20</div>
<div class='btn' style='left:1135px;top:814.25px;width:35px;height:20.75px;line-height:20.75px;background:#e3101c'>离线</div>
<div class='btn' style='left:1246px;top:791.25px;width:33.25px;height:20.75px;line-height:20.75px;background:#e3101c'>禁用</div>
<div class='btn' style='left:1290.25px;top:791.25px;width:69.25px;height:20.75px;line-height:20.75px;background:#009688'>银行卡信息</div>
<div class='btn' style='left:1370.5px;top:791.25px;width:57.5px;height:20.75px;line-height:20.75px;background:#f0643a'>地址信息</div>
<div class='btn' style='left:1438.5px;top:791.25px;width:36.25px;height:20.75px;line-height:20.75px;background:#009688'>编 辑</div>
<div class='btn' style='left:1485.25px;top:791.25px;width:46.25px;height:20.75px;line-height:20.75px;background:#009688'>加扣款</div>
<div class='btn' style='left:1542.25px;top:791.25px;width:57.5px;height:20.75px;line-height:20.75px;background:#009688'>赠送彩金</div>
<div class='btn' style='left:1610.25px;top:791.25px;width:69.5px;height:20.75px;line-height:20.75px;background:#e3101c'>刷新二维码</div>
<div class='btn' style='left:1690.5px;top:791.25px;width:57px;height:20.75px;line-height:20.75px;background:#f0643a'>发送短信</div>
<div class='btn' style='left:1758px;top:791.25px;width:36.25px;height:20.75px;line-height:20.75px;background:#e3101c'>删 除</div>
<div class='btn' style='left:1804.75px;top:791.25px;width:57.75px;height:20.75px;line-height:20.75px;background:#0f8a0f'>设为假人</div>
<div class='btn' style='left:1246px;top:814.5px;width:57.5px;height:20.75px;line-height:20.75px;background:#f0643a'>规则设置</div>
<div class='btn' style='left:1314.5px;top:814.5px;width:56.75px;height:20.75px;line-height:20.75px;background:#f0643a'>查看团队</div>
<div class='btn' style='left:1382.25px;top:814.5px;width:37.75px;height:20.75px;line-height:20.75px;background:#1f99f5'>账 变</div>
<div class='t n' style='left:251.5px;top:884.125px;font-size:12.5px;color:#666'>13887</div>
<div class='t n' style='left:297px;top:871.5px;font-size:12.5px;color:#666'>ปทเดฟ</div>
<div class='ab' style='left:297px;top:880.5px;width:66.25px;height:1.5px;background:#f0f0f0'></div>
<div class='t n' style='left:297px;top:894px;font-size:12.5px;color:#666'>VIP 1</div>
<div class='t n' style='left:393.25px;top:869.5px;font-size:12.5px;color:#666'>0854563288</div>
<div class='btn' style='left:392.5px;top:883.25px;width:34.5px;height:20.75px;line-height:20.75px;background:#1f99f5'>真人</div>
<div class='t n' style='left:488.75px;top:871.5px;font-size:12.5px;color:#666'>0.00</div>
<div class='ab' style='left:488.75px;top:880.5px;width:55px;height:1.5px;background:#f0f0f0'></div>
<div class='t n' style='left:488.75px;top:894px;font-size:12.5px;color:#666'>0.0000</div>
<div class='btn' style='left:575px;top:858.25px;width:82px;height:20.75px;line-height:20.75px;background:#1f99f5'>个人配置模式</div>
<div class='btn' style='left:575px;top:885.5px;width:66.5px;height:20.75px;line-height:20.75px;background:#FF5722'>0% - &gt;0%</div>
<div class='t n' style='left:696.25px;top:884.125px;font-size:12.5px;color:#666'>0</div>
<div class='t n' style='left:771.75px;top:871.5px;font-size:12.5px;color:#666'>56HRJW</div>
<div class='ab' style='left:771.75px;top:880.5px;width:71.5px;height:1.5px;background:#f0f0f0'></div>
<div class='t n' style='left:771.75px;top:894px;font-size:12.5px;color:#666'>KK</div>
<div class='t n' style='left:873.25px;top:884.125px;font-size:12.5px;color:#666'>2024-07-08 22:19:54</div>
<div class='ab' style='left:1023.5px;top:880.5px;width:80.25px;height:1.5px;background:#f0f0f0'></div>
<div class='t n' style='left:1133.75px;top:884.125px;font-size:11.875px;color:#666'>从未登陆</div>
<div class='btn' style='left:1246px;top:859.75px;width:33.25px;height:20.75px;line-height:20.75px;background:#e3101c'>禁用</div>
<div class='btn' style='left:1290.25px;top:859.75px;width:69.25px;height:20.75px;line-height:20.75px;background:#009688'>银行卡信息</div>
<div class='btn' style='left:1370.5px;top:859.75px;width:57.5px;height:20.75px;line-height:20.75px;background:#f0643a'>地址信息</div>
<div class='btn' style='left:1438.5px;top:859.75px;width:36.25px;height:20.75px;line-height:20.75px;background:#009688'>编 辑</div>
<div class='btn' style='left:1485.25px;top:859.75px;width:46.25px;height:20.75px;line-height:20.75px;background:#009688'>加扣款</div>
<div class='btn' style='left:1542.25px;top:859.75px;width:57.5px;height:20.75px;line-height:20.75px;background:#009688'>赠送彩金</div>
<div class='btn' style='left:1610.25px;top:859.75px;width:69.5px;height:20.75px;line-height:20.75px;background:#e3101c'>刷新二维码</div>
<div class='btn' style='left:1690.5px;top:859.75px;width:57px;height:20.75px;line-height:20.75px;background:#f0643a'>发送短信</div>
<div class='btn' style='left:1758px;top:859.75px;width:36.25px;height:20.75px;line-height:20.75px;background:#e3101c'>删 除</div>
<div class='btn' style='left:1804.75px;top:859.75px;width:57.75px;height:20.75px;line-height:20.75px;background:#0f8a0f'>设为假人</div>
<div class='btn' style='left:1246px;top:883px;width:57.5px;height:20.75px;line-height:20.75px;background:#f0643a'>规则设置</div>
<div class='btn' style='left:1314.5px;top:883px;width:56.75px;height:20.75px;line-height:20.75px;background:#f0643a'>查看团队</div>
<div class='btn' style='left:1382.25px;top:883px;width:37.75px;height:20.75px;line-height:20.75px;background:#1f99f5'>账 变</div>
<div class='t n' style='left:251.5px;top:952.625px;font-size:12.5px;color:#666'>13886</div>
<div class='t n' style='left:297px;top:940px;font-size:12.5px;color:#666'>Jk0519</div>
<div class='ab' style='left:297px;top:949px;width:66.25px;height:1.5px;background:#f0f0f0'></div>
<div class='t n' style='left:297px;top:962.5px;font-size:12.5px;color:#666'>VIP 1</div>
<div class='t n' style='left:393.25px;top:938px;font-size:12.5px;color:#666'>0620414021</div>
<div class='btn' style='left:392.5px;top:951.75px;width:34.5px;height:20.75px;line-height:20.75px;background:#1f99f5'>真人</div>
<div class='t n' style='left:488.75px;top:940px;font-size:12.5px;color:#666'>0.00</div>
<div class='ab' style='left:488.75px;top:949px;width:55px;height:1.5px;background:#f0f0f0'></div>
<div class='t n' style='left:488.75px;top:962.5px;font-size:12.5px;color:#666'>0.0000</div>
<div class='btn' style='left:575px;top:926.75px;width:82px;height:20.75px;line-height:20.75px;background:#1f99f5'>个人配置模式</div>
<div class='btn' style='left:575px;top:954px;width:66.5px;height:20.75px;line-height:20.75px;background:#FF5722'>0% - &gt;0%</div>
<div class='t n' style='left:696.25px;top:952.625px;font-size:12.5px;color:#666'>0</div>
<div class='t n' style='left:771.75px;top:940px;font-size:12.5px;color:#666'>BVW8I9</div>
<div class='ab' style='left:771.75px;top:949px;width:71.5px;height:1.5px;background:#f0f0f0'></div>
<div class='t n' style='left:771.75px;top:962.5px;font-size:12.5px;color:#666'>KK</div>
<div class='t n' style='left:873.25px;top:952.625px;font-size:12.5px;color:#666'>2024-07-08 22:19:14</div>
<div class='ab' style='left:1023.5px;top:949px;width:80.25px;height:1.5px;background:#f0f0f0'></div>
<div class='t n' style='left:1023.5px;top:940px;font-size:12.5px;color:#666'>223.205.142.236</div>
<div class='t n' style='left:1023.5px;top:962.5px;font-size:11.875px;color:#666'>泰国</div>
<div class='t n' style='left:1133.75px;top:940px;font-size:12.5px;color:#d94a4a'>07-08 22:58:08</div>
<div class='btn' style='left:1135px;top:951.25px;width:35px;height:20.75px;line-height:20.75px;background:#e3101c'>离线</div>
<div class='btn' style='left:1246px;top:928.25px;width:33.25px;height:20.75px;line-height:20.75px;background:#e3101c'>禁用</div>
<div class='btn' style='left:1290.25px;top:928.25px;width:69.25px;height:20.75px;line-height:20.75px;background:#009688'>银行卡信息</div>
<div class='btn' style='left:1370.5px;top:928.25px;width:57.5px;height:20.75px;line-height:20.75px;background:#f0643a'>地址信息</div>
<div class='btn' style='left:1438.5px;top:928.25px;width:36.25px;height:20.75px;line-height:20.75px;background:#009688'>编 辑</div>
<div class='btn' style='left:1485.25px;top:928.25px;width:46.25px;height:20.75px;line-height:20.75px;background:#009688'>加扣款</div>
<div class='btn' style='left:1542.25px;top:928.25px;width:57.5px;height:20.75px;line-height:20.75px;background:#009688'>赠送彩金</div>
<div class='btn' style='left:1610.25px;top:928.25px;width:69.5px;height:20.75px;line-height:20.75px;background:#e3101c'>刷新二维码</div>
<div class='btn' style='left:1690.5px;top:928.25px;width:57px;height:20.75px;line-height:20.75px;background:#f0643a'>发送短信</div>
<div class='btn' style='left:1758px;top:928.25px;width:36.25px;height:20.75px;line-height:20.75px;background:#e3101c'>删 除</div>
<div class='btn' style='left:1804.75px;top:928.25px;width:57.75px;height:20.75px;line-height:20.75px;background:#0f8a0f'>设为假人</div>
<div class='btn' style='left:1246px;top:951.5px;width:57.5px;height:20.75px;line-height:20.75px;background:#f0643a'>规则设置</div>
<div class='btn' style='left:1314.5px;top:951.5px;width:56.75px;height:20.75px;line-height:20.75px;background:#f0643a'>查看团队</div>
<div class='btn' style='left:1382.25px;top:951.5px;width:37.75px;height:20.75px;line-height:20.75px;background:#1f99f5'>账 变</div>
<div class='t n' style='left:251.5px;top:1021.125px;font-size:12.5px;color:#666'>13885</div>
<div class='t n' style='left:297px;top:1008.5px;font-size:12.5px;color:#666'>Ituuu</div>
<div class='ab' style='left:297px;top:1017.5px;width:66.25px;height:1.5px;background:#f0f0f0'></div>
<div class='t n' style='left:297px;top:1031px;font-size:12.5px;color:#666'>VIP 1</div>
<div class='t n' style='left:393.25px;top:1006.5px;font-size:12.5px;color:#666'>0895698547</div>
<div class='btn' style='left:392.5px;top:1020.25px;width:34.5px;height:20.75px;line-height:20.75px;background:#1f99f5'>真人</div>
<div class='t n' style='left:488.75px;top:1008.5px;font-size:12.5px;color:#666'>0.00</div>
<div class='ab' style='left:488.75px;top:1017.5px;width:55px;height:1.5px;background:#f0f0f0'></div>
<div class='t n' style='left:488.75px;top:1031px;font-size:12.5px;color:#666'>0.0000</div>
<div class='btn' style='left:575px;top:995.25px;width:82px;height:20.75px;line-height:20.75px;background:#1f99f5'>个人配置模式</div>
<div class='btn' style='left:575px;top:1022.5px;width:66.5px;height:20.75px;line-height:20.75px;background:#FF5722'>0% - &gt;0%</div>
<div class='t n' style='left:696.25px;top:1021.125px;font-size:12.5px;color:#666'>0</div>
<div class='t n' style='left:771.75px;top:1008.5px;font-size:12.5px;color:#666'>ZD2MSR</div>
<div class='ab' style='left:771.75px;top:1017.5px;width:71.5px;height:1.5px;background:#f0f0f0'></div>
<div class='t n' style='left:771.75px;top:1031px;font-size:12.5px;color:#666'>tt</div>
<div class='t n' style='left:873.25px;top:1021.125px;font-size:12.5px;color:#666'>2024-07-08 22:17:01</div>
<div class='ab' style='left:1023.5px;top:1017.5px;width:80.25px;height:1.5px;background:#f0f0f0'></div>
<div class='t n' style='left:1133.75px;top:1021.125px;font-size:11.875px;color:#666'>从未登陆</div>
<div class='btn' style='left:1246px;top:996.75px;width:33.25px;height:20.75px;line-height:20.75px;background:#e3101c'>禁用</div>
<div class='btn' style='left:1290.25px;top:996.75px;width:69.25px;height:20.75px;line-height:20.75px;background:#009688'>银行卡信息</div>
<div class='btn' style='left:1370.5px;top:996.75px;width:57.5px;height:20.75px;line-height:20.75px;background:#f0643a'>地址信息</div>
<div class='btn' style='left:1438.5px;top:996.75px;width:36.25px;height:20.75px;line-height:20.75px;background:#009688'>编 辑</div>
<div class='btn' style='left:1485.25px;top:996.75px;width:46.25px;height:20.75px;line-height:20.75px;background:#009688'>加扣款</div>
<div class='btn' style='left:1542.25px;top:996.75px;width:57.5px;height:20.75px;line-height:20.75px;background:#009688'>赠送彩金</div>
<div class='btn' style='left:1610.25px;top:996.75px;width:69.5px;height:20.75px;line-height:20.75px;background:#e3101c'>刷新二维码</div>
<div class='btn' style='left:1690.5px;top:996.75px;width:57px;height:20.75px;line-height:20.75px;background:#f0643a'>发送短信</div>
<div class='btn' style='left:1758px;top:996.75px;width:36.25px;height:20.75px;line-height:20.75px;background:#e3101c'>删 除</div>
<div class='btn' style='left:1804.75px;top:996.75px;width:57.75px;height:20.75px;line-height:20.75px;background:#0f8a0f'>设为假人</div>
<div class='btn' style='left:1246px;top:1020px;width:57.5px;height:20.75px;line-height:20.75px;background:#f0643a'>规则设置</div>
<div class='btn' style='left:1314.5px;top:1020px;width:56.75px;height:20.75px;line-height:20.75px;background:#f0643a'>查看团队</div>
<div class='btn' style='left:1382.25px;top:1020px;width:37.75px;height:20.75px;line-height:20.75px;background:#1f99f5'>账 变</div>
<div class='t n' style='left:251.5px;top:1089.625px;font-size:12.5px;color:#666'>13884</div>
<div class='t n' style='left:297px;top:1077px;font-size:12.5px;color:#666'>aa28</div>
<div class='ab' style='left:297px;top:1086px;width:66.25px;height:1.5px;background:#f0f0f0'></div>
<div class='t n' style='left:297px;top:1099.5px;font-size:12.5px;color:#666'>VIP 3</div>
<div class='t n' style='left:393.25px;top:1075px;font-size:12.5px;color:#666'>0587512365</div>
<div class='btn' style='left:392.5px;top:1088.75px;width:34.5px;height:20.75px;line-height:20.75px;background:#1f99f5'>真人</div>
<div class='t n' style='left:488.75px;top:1077px;font-size:12.5px;color:#666'>300.00</div>
<div class='ab' style='left:488.75px;top:1086px;width:55px;height:1.5px;background:#f0f0f0'></div>
<div class='t n' style='left:488.75px;top:1099.5px;font-size:12.5px;color:#666'>0.0000</div>
<div class='btn' style='left:575px;top:1063.75px;width:58px;height:20.75px;line-height:20.75px;background:#009688'>分组模式</div>
<div class='btn' style='left:575px;top:1091px;width:138.75px;height:20.75px;line-height:20.75px;background:#e3101c;text-align:left;padding-left:5px;font-size:12.5px'>เลือด300/10 ลิ่มลลลลล</div>
<div class='t n' style='left:696.25px;top:1089.625px;font-size:12.5px;color:#666'>0</div>
<div class='t n' style='left:771.75px;top:1077px;font-size:12.5px;color:#666'>UK74PP</div>
<div class='ab' style='left:771.75px;top:1086px;width:71.5px;height:1.5px;background:#f0f0f0'></div>
<div class='t n' style='left:771.75px;top:1099.5px;font-size:12.5px;color:#666'>tt</div>
<div class='t n' style='left:873.25px;top:1089.625px;font-size:12.5px;color:#666'>2024-07-08 22:16:55</div>
<div class='ab' style='left:1023.5px;top:1086px;width:80.25px;height:1.5px;background:#f0f0f0'></div>
<div class='t n' style='left:1023.5px;top:1077px;font-size:12.5px;color:#666'>147.50.120.93</div>
<div class='t n' style='left:1023.5px;top:1099.5px;font-size:11.875px;color:#666'>泰国</div>
<div class='t n' style='left:1133.75px;top:1077px;font-size:12.5px;color:#d94a4a'>07-08 22:41:14</div>
<div class='btn' style='left:1135px;top:1088.25px;width:35px;height:20.75px;line-height:20.75px;background:#e3101c'>离线</div>
<div class='btn' style='left:1246px;top:1065.25px;width:33.25px;height:20.75px;line-height:20.75px;background:#e3101c'>禁用</div>
<div class='btn' style='left:1290.25px;top:1065.25px;width:69.25px;height:20.75px;line-height:20.75px;background:#009688'>银行卡信息</div>
<div class='btn' style='left:1370.5px;top:1065.25px;width:57.5px;height:20.75px;line-height:20.75px;background:#f0643a'>地址信息</div>
<div class='btn' style='left:1438.5px;top:1065.25px;width:36.25px;height:20.75px;line-height:20.75px;background:#009688'>编 辑</div>
<div class='btn' style='left:1485.25px;top:1065.25px;width:46.25px;height:20.75px;line-height:20.75px;background:#009688'>加扣款</div>
<div class='btn' style='left:1542.25px;top:1065.25px;width:57.5px;height:20.75px;line-height:20.75px;background:#009688'>赠送彩金</div>
<div class='btn' style='left:1610.25px;top:1065.25px;width:69.5px;height:20.75px;line-height:20.75px;background:#e3101c'>刷新二维码</div>
<div class='btn' style='left:1690.5px;top:1065.25px;width:57px;height:20.75px;line-height:20.75px;background:#f0643a'>发送短信</div>
<div class='btn' style='left:1758px;top:1065.25px;width:36.25px;height:20.75px;line-height:20.75px;background:#e3101c'>删 除</div>
<div class='btn' style='left:1804.75px;top:1065.25px;width:57.75px;height:20.75px;line-height:20.75px;background:#0f8a0f'>设为假人</div>
<div class='btn' style='left:1246px;top:1088.5px;width:57.5px;height:20.75px;line-height:20.75px;background:#f0643a'>规则设置</div>
<div class='btn' style='left:1314.5px;top:1088.5px;width:56.75px;height:20.75px;line-height:20.75px;background:#f0643a'>查看团队</div>
<div class='btn' style='left:1382.25px;top:1088.5px;width:37.75px;height:20.75px;line-height:20.75px;background:#1f99f5'>账 变</div>
<div class='t n' style='left:251.5px;top:1158.125px;font-size:12.5px;color:#666'>13883</div>
<div class='t n' style='left:297px;top:1145.5px;font-size:12.5px;color:#666'>aa19</div>
<div class='ab' style='left:297px;top:1154.5px;width:66.25px;height:1.5px;background:#f0f0f0'></div>
<div class='t n' style='left:297px;top:1168px;font-size:12.5px;color:#666'>VIP 1</div>
<div class='t n' style='left:393.25px;top:1143.5px;font-size:12.5px;color:#666'>0821456577</div>
<div class='btn' style='left:392.5px;top:1157.25px;width:34.5px;height:20.75px;line-height:20.75px;background:#1f99f5'>真人</div>
<div class='t n' style='left:488.75px;top:1145.5px;font-size:12.5px;color:#666'>0.00</div>
<div class='ab' style='left:488.75px;top:1154.5px;width:55px;height:1.5px;background:#f0f0f0'></div>
<div class='t n' style='left:488.75px;top:1168px;font-size:12.5px;color:#666'>0.0000</div>
<div class='btn' style='left:575px;top:1132.25px;width:82px;height:20.75px;line-height:20.75px;background:#1f99f5'>个人配置模式</div>
<div class='btn' style='left:575px;top:1159.5px;width:66.5px;height:20.75px;line-height:20.75px;background:#FF5722'>0% - &gt;0%</div>
<div class='t n' style='left:696.25px;top:1158.125px;font-size:12.5px;color:#666'>0</div>
<div class='t n' style='left:771.75px;top:1145.5px;font-size:12.5px;color:#666'>VJQ4MG</div>
<div class='ab' style='left:771.75px;top:1154.5px;width:71.5px;height:1.5px;background:#f0f0f0'></div>
<div class='t n' style='left:771.75px;top:1168px;font-size:12.5px;color:#666'>tt</div>
<div class='t n' style='left:873.25px;top:1158.125px;font-size:12.5px;color:#666'>2024-07-08 22:12:57</div>
<div class='ab' style='left:1023.5px;top:1154.5px;width:80.25px;height:1.5px;background:#f0f0f0'></div>
<div class='t n' style='left:1133.75px;top:1158.125px;font-size:11.875px;color:#666'>从未登陆</div>
<div class='btn' style='left:1246px;top:1133.75px;width:33.25px;height:20.75px;line-height:20.75px;background:#e3101c'>禁用</div>
<div class='btn' style='left:1290.25px;top:1133.75px;width:69.25px;height:20.75px;line-height:20.75px;background:#009688'>银行卡信息</div>
<div class='btn' style='left:1370.5px;top:1133.75px;width:57.5px;height:20.75px;line-height:20.75px;background:#f0643a'>地址信息</div>
<div class='btn' style='left:1438.5px;top:1133.75px;width:36.25px;height:20.75px;line-height:20.75px;background:#009688'>编 辑</div>
<div class='btn' style='left:1485.25px;top:1133.75px;width:46.25px;height:20.75px;line-height:20.75px;background:#009688'>加扣款</div>
<div class='btn' style='left:1542.25px;top:1133.75px;width:57.5px;height:20.75px;line-height:20.75px;background:#009688'>赠送彩金</div>
<div class='btn' style='left:1610.25px;top:1133.75px;width:69.5px;height:20.75px;line-height:20.75px;background:#e3101c'>刷新二维码</div>
<div class='btn' style='left:1690.5px;top:1133.75px;width:57px;height:20.75px;line-height:20.75px;background:#f0643a'>发送短信</div>
<div class='btn' style='left:1758px;top:1133.75px;width:36.25px;height:20.75px;line-height:20.75px;background:#e3101c'>删 除</div>
<div class='btn' style='left:1804.75px;top:1133.75px;width:57.75px;height:20.75px;line-height:20.75px;background:#0f8a0f'>设为假人</div>
<div class='btn' style='left:1246px;top:1157px;width:57.5px;height:20.75px;line-height:20.75px;background:#f0643a'>规则设置</div>
<div class='btn' style='left:1314.5px;top:1157px;width:56.75px;height:20.75px;line-height:20.75px;background:#f0643a'>查看团队</div>
<div class='btn' style='left:1382.25px;top:1157px;width:37.75px;height:20.75px;line-height:20.75px;background:#1f99f5'>账 变</div>
<div class='t n' style='left:251.5px;top:1226.625px;font-size:12.5px;color:#666'>13882</div>
<div class='t n' style='left:297px;top:1214px;font-size:12.5px;color:#666'>sd10012 <span style="font-size:9px">⭐</span>7</div>
<div class='ab' style='left:297px;top:1223px;width:66.25px;height:1.5px;background:#f0f0f0'></div>
<div class='t n' style='left:297px;top:1236.5px;font-size:12.5px;color:#666'>VIP 1</div>
<div class='t n' style='left:393.25px;top:1212px;font-size:12.5px;color:#666'>0888888888</div>
<div class='btn' style='left:392.5px;top:1225.75px;width:34.5px;height:20.75px;line-height:20.75px;background:#1f99f5'>真人</div>
<div class='t n' style='left:488.75px;top:1214px;font-size:12.5px;color:#666'>0.00</div>
<div class='ab' style='left:488.75px;top:1223px;width:55px;height:1.5px;background:#f0f0f0'></div>
<div class='t n' style='left:488.75px;top:1236.5px;font-size:12.5px;color:#666'>0.0000</div>
<div class='btn' style='left:575px;top:1200.75px;width:82px;height:20.75px;line-height:20.75px;background:#1f99f5'>个人配置模式</div>
<div class='btn' style='left:575px;top:1228px;width:66.5px;height:20.75px;line-height:20.75px;background:#FF5722'>0% - &gt;0%</div>
<div class='t n' style='left:696.25px;top:1226.625px;font-size:12.5px;color:#666'>0</div>
<div class='t n' style='left:771.75px;top:1214px;font-size:12.5px;color:#666'>KBNMSH</div>
<div class='ab' style='left:771.75px;top:1223px;width:71.5px;height:1.5px;background:#f0f0f0'></div>
<div class='t n' style='left:771.75px;top:1236.5px;font-size:12.5px;color:#666'>tt</div>
<div class='t n' style='left:873.25px;top:1226.625px;font-size:12.5px;color:#666'>2024-07-08 22:12:40</div>
<div class='ab' style='left:1023.5px;top:1223px;width:80.25px;height:1.5px;background:#f0f0f0'></div>
<div class='t n' style='left:1023.5px;top:1214px;font-size:12.5px;color:#666'>147.50.120.93</div>
<div class='t n' style='left:1023.5px;top:1236.5px;font-size:11.875px;color:#666'>泰国</div>
<div class='t n' style='left:1133.75px;top:1214px;font-size:12.5px;color:#d94a4a'>07-09 04:39:56</div>
<div class='btn' style='left:1135px;top:1225.25px;width:35px;height:20.75px;line-height:20.75px;background:#e3101c'>离线</div>
<div class='btn' style='left:1246px;top:1202.25px;width:33.25px;height:20.75px;line-height:20.75px;background:#e3101c'>禁用</div>
<div class='btn' style='left:1290.25px;top:1202.25px;width:69.25px;height:20.75px;line-height:20.75px;background:#009688'>银行卡信息</div>
<div class='btn' style='left:1370.5px;top:1202.25px;width:57.5px;height:20.75px;line-height:20.75px;background:#f0643a'>地址信息</div>
<div class='btn' style='left:1438.5px;top:1202.25px;width:36.25px;height:20.75px;line-height:20.75px;background:#009688'>编 辑</div>
<div class='btn' style='left:1485.25px;top:1202.25px;width:46.25px;height:20.75px;line-height:20.75px;background:#009688'>加扣款</div>
<div class='btn' style='left:1542.25px;top:1202.25px;width:57.5px;height:20.75px;line-height:20.75px;background:#009688'>赠送彩金</div>
<div class='btn' style='left:1610.25px;top:1202.25px;width:69.5px;height:20.75px;line-height:20.75px;background:#e3101c'>刷新二维码</div>
<div class='btn' style='left:1690.5px;top:1202.25px;width:57px;height:20.75px;line-height:20.75px;background:#f0643a'>发送短信</div>
<div class='btn' style='left:1758px;top:1202.25px;width:36.25px;height:20.75px;line-height:20.75px;background:#e3101c'>删 除</div>
<div class='btn' style='left:1804.75px;top:1202.25px;width:57.75px;height:20.75px;line-height:20.75px;background:#0f8a0f'>设为假人</div>
<div class='btn' style='left:1246px;top:1225.5px;width:57.5px;height:20.75px;line-height:20.75px;background:#f0643a'>规则设置</div>
<div class='btn' style='left:1314.5px;top:1225.5px;width:56.75px;height:20.75px;line-height:20.75px;background:#f0643a'>查看团队</div>
<div class='btn' style='left:1382.25px;top:1225.5px;width:37.75px;height:20.75px;line-height:20.75px;background:#1f99f5'>账 变</div>
<div class='t n' style='left:251.5px;top:1295.125px;font-size:12.5px;color:#666'>13881</div>
<div class='t n' style='left:297px;top:1282.5px;font-size:12.5px;color:#666'>aa11</div>
<div class='ab' style='left:297px;top:1291.5px;width:66.25px;height:1.5px;background:#f0f0f0'></div>
<div class='t n' style='left:297px;top:1305px;font-size:12.5px;color:#666'>VIP 1</div>
<div class='t n' style='left:393.25px;top:1280.5px;font-size:12.5px;color:#666'>0888888888</div>
<div class='btn' style='left:392.5px;top:1294.25px;width:34.5px;height:20.75px;line-height:20.75px;background:#1f99f5'>真人</div>
<div class='t n' style='left:488.75px;top:1282.5px;font-size:12.5px;color:#666'>0.00</div>
<div class='ab' style='left:488.75px;top:1291.5px;width:55px;height:1.5px;background:#f0f0f0'></div>
<div class='t n' style='left:488.75px;top:1305px;font-size:12.5px;color:#666'>0.0000</div>
<div class='btn' style='left:575px;top:1269.25px;width:82px;height:20.75px;line-height:20.75px;background:#1f99f5'>个人配置模式</div>
<div class='btn' style='left:575px;top:1296.5px;width:66.5px;height:20.75px;line-height:20.75px;background:#FF5722'>0% - &gt;0%</div>
<div class='t n' style='left:696.25px;top:1295.125px;font-size:12.5px;color:#666'>0</div>
<div class='t n' style='left:771.75px;top:1282.5px;font-size:12.5px;color:#666'>KBNMSH</div>
<div class='ab' style='left:771.75px;top:1291.5px;width:71.5px;height:1.5px;background:#f0f0f0'></div>
<div class='t n' style='left:771.75px;top:1305px;font-size:12.5px;color:#666'>tt</div>
<div class='t n' style='left:873.25px;top:1295.125px;font-size:12.5px;color:#666'>2024-07-08 22:12:40</div>
<div class='ab' style='left:1023.5px;top:1291.5px;width:80.25px;height:1.5px;background:#f0f0f0'></div>
<div class='t n' style='left:1133.75px;top:1295.125px;font-size:11.875px;color:#666'>从未登陆</div>
<div class='btn' style='left:1246px;top:1270.75px;width:33.25px;height:20.75px;line-height:20.75px;background:#e3101c'>禁用</div>
<div class='btn' style='left:1290.25px;top:1270.75px;width:69.25px;height:20.75px;line-height:20.75px;background:#009688'>银行卡信息</div>
<div class='btn' style='left:1370.5px;top:1270.75px;width:57.5px;height:20.75px;line-height:20.75px;background:#f0643a'>地址信息</div>
<div class='btn' style='left:1438.5px;top:1270.75px;width:36.25px;height:20.75px;line-height:20.75px;background:#009688'>编 辑</div>
<div class='btn' style='left:1485.25px;top:1270.75px;width:46.25px;height:20.75px;line-height:20.75px;background:#009688'>加扣款</div>
<div class='btn' style='left:1542.25px;top:1270.75px;width:57.5px;height:20.75px;line-height:20.75px;background:#009688'>赠送彩金</div>
<div class='btn' style='left:1610.25px;top:1270.75px;width:69.5px;height:20.75px;line-height:20.75px;background:#e3101c'>刷新二维码</div>
<div class='btn' style='left:1690.5px;top:1270.75px;width:57px;height:20.75px;line-height:20.75px;background:#f0643a'>发送短信</div>
<div class='btn' style='left:1758px;top:1270.75px;width:36.25px;height:20.75px;line-height:20.75px;background:#e3101c'>删 除</div>
<div class='btn' style='left:1804.75px;top:1270.75px;width:57.75px;height:20.75px;line-height:20.75px;background:#0f8a0f'>设为假人</div>
<div class='btn' style='left:1246px;top:1294px;width:57.5px;height:20.75px;line-height:20.75px;background:#f0643a'>规则设置</div>
<div class='btn' style='left:1314.5px;top:1294px;width:56.75px;height:20.75px;line-height:20.75px;background:#f0643a'>查看团队</div>
<div class='btn' style='left:1382.25px;top:1294px;width:37.75px;height:20.75px;line-height:20.75px;background:#1f99f5'>账 变</div>
<div class='ab' style='left:2542.5px;top:101.25px;width:17.5px;height:1170px;background:#f2f2f2'></div>
<div class='ab' style='left:2519.75px;top:299px;width:2.25px;height:971px;background:#d4d4d4'></div>
<div class='ab' style='left:2541.5px;top:113.75px;width:2px;height:1157.5px;background:#e8e8e8'></div></div></body></html>
